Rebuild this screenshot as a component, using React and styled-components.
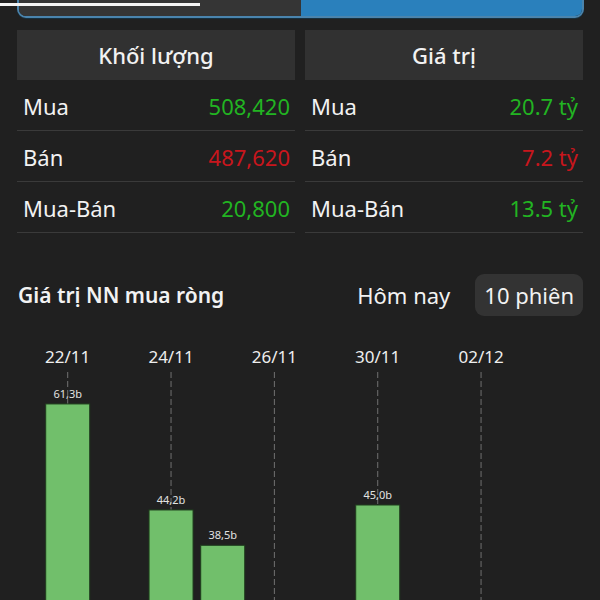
import styled, { createGlobalStyle } from "styled-components";

const GlobalStyle = createGlobalStyle`
	body {
		margin: 0;
		background: #202020;
		font-family: "Noto Sans", "Open Sans", sans-serif;
		color: #f2f2f2;
	}
`;

const Page = styled.div`
	position: relative;
	width: 600px;
	height: 600px;
	overflow: hidden;
	background: #202020;
`;

const TopLine = styled.div`
	position: absolute;
	top: 3px;
	left: 0;
	width: 200px;
	height: 3px;
	background: #f4f4f4;
`;

const Segmented = styled.div`
	display: grid;
	grid-template-columns: 1fr 1fr;
	height: 30px;
	margin: -12px 16px 0 17px;
	border: 2px solid #4a84ad;
	border-radius: 9px;
	overflow: hidden;
	box-sizing: border-box;
	box-shadow: 0 1px 0 #16303f;
`;

const Segment = styled.div`
	background: ${(p) => (p.active ? "#2a80bc" : "#353535")};
`;

const Stats = styled.div`
	display: grid;
	grid-template-columns: 1fr 1fr;
	gap: 10px;
	padding: 0 17px;
	margin-top: 12px;
`;

const Column = styled.div`
	display: flex;
	flex-direction: column;
`;

const ColumnHeader = styled.div`
	height: 50px;
	display: flex;
	align-items: center;
	justify-content: center;
	background: #313131;
	font-size: 22px;
	font-weight: 500;
`;

const Row = styled.div`
	height: 51px;
	box-sizing: border-box;
	display: flex;
	align-items: center;
	justify-content: space-between;
	padding: 2px 5px 0 6px;
	border-bottom: 1px solid #3a3a3a;
	font-size: 22px;
`;

const Value = styled.span`
	color: ${(p) => (p.down ? "#c8161d" : "#22b422")};
`;

const SectionHeader = styled.div`
	display: flex;
	align-items: center;
	height: 42px;
	margin-top: 41px;
	padding: 0 17px 0 18px;
`;

const SectionTitle = styled.div`
	flex: 1;
	font-size: 21px;
	font-weight: 600;
`;

const Period = styled.div`
	display: flex;
	align-items: center;
	height: 42px;
	padding: 0 9px;
	font-size: 22px;
	border-radius: 9px;
	background: ${(p) => (p.active ? "#333333" : "transparent")};
	margin-left: ${(p) => (p.active ? "16px" : "0")};
`;

const Chart = styled.svg`
	display: block;
	margin-top: 28px;
`;

const stats = [
	{
		title: "Khối lượng",
		rows: [
			["Mua", "508,420", false],
			["Bán", "487,620", true],
			["Mua-Bán", "20,800", false],
		],
	},
	{
		title: "Giá trị",
		rows: [
			["Mua", "20.7 tỷ", false],
			["Bán", "7.2 tỷ", true],
			["Mua-Bán", "13.5 tỷ", false],
		],
	},
];

// only buying sessions reach into the visible part of the chart
const sessions = [
	{ date: "22/11", value: 61.3 },
	{ date: "23/11", value: 0 },
	{ date: "24/11", value: 44.2 },
	{ date: "25/11", value: 38.5 },
	{ date: "26/11", value: 0 },
	{ date: "29/11", value: 0 },
	{ date: "30/11", value: 45.0 },
	{ date: "01/12", value: 0 },
	{ date: "02/12", value: 0 },
	{ date: "05/12", value: 0 },
];

const SLOT = 51.67;
const FIRST = 67.7;
const ZERO = 440;
const SCALE = 6.2;
const BAR = 44;

const NetChart = () => (
	<Chart width="600" height="256" viewBox="0 0 600 256">
		{sessions.map((s, i) => {
			const cx = FIRST + i * SLOT;
			if (i % 2) return null;
			return (
				<g key={s.date}>
					<line
						x1={cx}
						x2={cx}
						y1="28"
						y2="256"
						stroke="#707070"
						strokeWidth="1"
						strokeDasharray="6 3"
					/>
					<text
						x={cx}
						y="19"
						textAnchor="middle"
						fontSize="17"
						fill="#eeeeee"
						fontFamily="Noto Sans, sans-serif"
					>
						{s.date}
					</text>
				</g>
			);
		})}
		{sessions
			.map((s, i) => ({ ...s, cx: FIRST + i * SLOT }))
			.filter((s) => s.value > 0)
			.map((s) => {
				const h = s.value * SCALE;
				const top = ZERO - h;
				return (
					<g key={s.date + "b"}>
						<rect
							x={s.cx - BAR / 2}
							y={top}
							width={BAR}
							height={h}
							fill="#71bf6b"
							stroke="#1f3d1d"
							strokeWidth="1"
						/>
						<text
							x={s.cx}
							y={top - 6}
							textAnchor="middle"
							fontSize="11"
							fill="#e2e2e2"
							fontFamily="Noto Sans, sans-serif"
						>
							{s.value.toFixed(1).replace(".", ",")}b
						</text>
					</g>
				);
			})}
	</Chart>
);

export default function App() {
	return (
		<Page>
			<GlobalStyle />
			<Segmented>
				<Segment />
				<Segment active />
			</Segmented>
			<TopLine />
			<Stats>
				{stats.map((col) => (
					<Column key={col.title}>
						<ColumnHeader>{col.title}</ColumnHeader>
						{col.rows.map(([label, value, down]) => (
							<Row key={label}>
								<span>{label}</span>
								<Value down={down}>{value}</Value>
							</Row>
						))}
					</Column>
				))}
			</Stats>
			<SectionHeader>
				<SectionTitle>Giá trị NN mua ròng</SectionTitle>
				<Period>Hôm nay</Period>
				<Period active>10 phiên</Period>
			</SectionHeader>
			<NetChart />
		</Page>
	);
}
